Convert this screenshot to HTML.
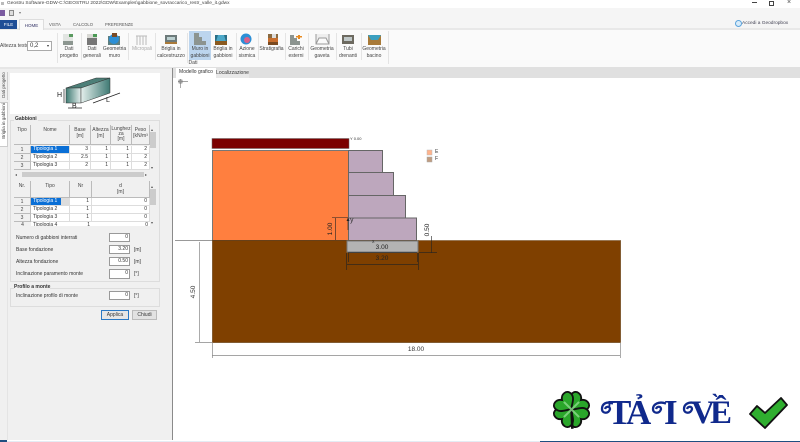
<!DOCTYPE html>
<html><head><meta charset="utf-8">
<style>
html,body{margin:0;padding:0;background:#fff}
#p{position:relative;width:800px;height:442px;overflow:hidden;background:#fff;font-family:"Liberation Sans",sans-serif;color:#333}
#p div{position:absolute}
#w{left:0;top:0;width:800px;height:442px;filter:blur(.3px)}
.t{white-space:nowrap;font-size:5px;line-height:6px}
.c{text-align:center}
.rb{font-size:5px;line-height:7px;text-align:center;color:#444;top:46px}
svg{position:absolute;left:0;top:0}
.g{background:#fff;border-bottom:1px solid #ddd;border-right:1px solid #ddd;box-sizing:border-box;font-size:5px;line-height:7px;height:8px;text-align:right;padding-right:2px}
.h{background:#f0f0f0;border-right:1px solid #bbb;border-bottom:1px solid #bbb;box-sizing:border-box;font-size:5px;line-height:6px;text-align:center;padding-top:2px;color:#444}
.i{background:#fff;border:1px solid #999;box-sizing:border-box;font-size:5px;line-height:7px;text-align:right;padding-right:1px;height:9px;width:21px;left:109px}
.a{font-size:4px;line-height:5px;color:#555}
.d{font-size:6.500px;line-height:8px;color:#333;white-space:nowrap;text-align:center}
.z{font-family:"Liberation Serif",serif;font-weight:bold;color:#10298c;font-size:35px;line-height:40px;top:393px;white-space:nowrap}
</style></head><body><div id="p"><div id="w">

<div style="left:0;top:8px;width:800px;height:20px;background:#f5f5f5"></div>
<div style="left:0;top:28px;width:800px;height:2px;background:#e8e8e8"></div>
<div style="left:0;top:30px;width:800px;height:37px;background:#fafafa"></div>
<div style="left:0;top:67px;width:800px;height:2px;background:#e6e6e6"></div>
<div style="left:0;top:69px;width:173px;height:371px;background:#f0f0f0"></div>
<div style="left:172px;top:68px;width:1px;height:372px;background:#8a8a8a"></div>
<div style="left:7px;top:145px;width:1px;height:295px;background:#e4e4e4"></div>
<div style="left:173px;top:67px;width:627px;height:11px;background:#e0e0e0"></div>
<div style="left:174px;top:78px;width:626px;height:364px;background:#fff"></div>

<div class="t" style="left:7px;top:1px;font-size:4.800px;color:#444">Geostru Software-GDW-C:\GEOSTRU 2022\GDW\Examples\gabbione_sovraccarico_restr_valle_it.gdwx</div>
<div style="left:1px;top:2px;width:3px;height:3px;background:#bbb"></div>
<div style="left:752px;top:2px;width:5px;height:1px;background:#444"></div>
<div style="left:769px;top:1px;width:3px;height:3px;border:1px solid #444"></div>
<div class="t" style="left:787px;top:0;color:#444;font-size:7px">×</div>
<div style="left:0;top:10px;width:5px;height:6px;background:#7a5aa0"></div>
<div style="left:9px;top:10px;width:5px;height:6px;background:#ddd;border:1px solid #888;box-sizing:border-box"></div>
<div class="t" style="left:19px;top:10px;font-size:4px;color:#777">▾</div>

<div class="t c" style="left:0;top:20px;width:17px;height:9px;background:#1f4e96;color:#fff;line-height:9px;font-size:4.500px">FILE</div>
<div class="t c" style="left:19px;top:19px;width:25px;height:11px;background:#fafafa;line-height:11px;color:#336;border:solid #ddd;border-width:1px 1px 0;box-sizing:border-box;font-size:4.500px">HOME</div>
<div class="t" style="left:49px;top:21px;line-height:7px;color:#555;font-size:4.200px">VISTA</div>
<div class="t" style="left:73px;top:21px;line-height:7px;color:#555;font-size:4.200px">CALCOLO</div>
<div class="t" style="left:105px;top:21px;line-height:7px;color:#555;font-size:4.200px">PREFERENZE</div>

<div style="left:735px;top:20px;width:5px;height:5px;border:1px solid #5ba3dc;border-radius:50%;background:#d8ecfa"></div>
<div class="t" style="left:742px;top:20px;line-height:7px;color:#445;font-size:4.800px">Accedi a Geodropbox</div>

<div class="t" style="left:0;top:43px;color:#444;font-size:5px">Altezza testo</div>
<div class="t" style="left:27px;top:41px;width:25px;height:10px;background:#fff;border:1px solid #aaa;box-sizing:border-box;line-height:8px;padding-left:2px;font-size:6px">0,2<span style="position:absolute;right:2px;font-size:4px">▾</span></div>

<div style="left:189px;top:31px;width:22px;height:29px;background:#bcd5ee"></div>

<svg width="800" height="70" viewBox="0 0 800 70">
<g stroke="#e4e4e4" stroke-width="1"><path d="M57.500 33V63M81.500 33V60M128.500 33V60M155.500 33V60M187.500 33V63M236.500 33V60M258.500 33V60M285.500 33V60M308.500 33V60M336.500 33V60M361.500 33V60M388.500 31V64"/></g>
<rect x="63" y="34" width="10" height="11" fill="#e2e5e2"/><rect x="63" y="41" width="10" height="4" fill="#8c9690"/><rect x="69" y="34" width="4" height="3" fill="#5a9a60"/>
<rect x="87" y="34" width="10" height="11" fill="#d8d8d4"/><rect x="87" y="38" width="10" height="7" fill="#777"/><rect x="93" y="34" width="4" height="3" fill="#4b9a55"/>
<rect x="108" y="36" width="12" height="9" fill="#5e7f80"/><circle cx="114" cy="39" r="5" fill="#2c8fd6"/><rect x="112" y="33" width="5" height="4" fill="#7a4b25"/>
<path d="M136 36h11M137 36v9M140 36v9M143 36v9M146 36v9" stroke="#bbb" fill="none"/>
<rect x="165" y="35" width="12" height="7" fill="#6d7a7a"/><rect x="167" y="37" width="8" height="3" fill="#bcd0d0"/><rect x="165" y="42" width="12" height="2" fill="#aa7a3a"/>
<path d="M194 33h5v4h3v4h4v4h-12z" fill="#8c9490"/>
<rect x="215" y="35" width="12" height="10" fill="#2a6e86"/><path d="M215 45l3-10h6l3 10z" fill="#4ca8c8"/><rect x="215" y="41" width="12" height="4" fill="#8a5a20"/>
<circle cx="246" cy="39" r="5.500" fill="#2c8fd6"/><circle cx="247" cy="40" r="3" fill="#d8608a"/>
<rect x="268" y="34" width="10" height="4" fill="#8a6a40"/><rect x="268" y="38" width="10" height="4" fill="#c86e2e"/><rect x="268" y="42" width="10" height="3" fill="#7a4a20"/><rect x="272" y="34" width="4" height="4" fill="#ddd"/>
<path d="M290 35h4v3h3v3h3v4h-10z" fill="#8c9490"/><rect x="298" y="35" width="2" height="4" fill="#e88a20"/><rect x="296" y="36" width="6" height="1.500" fill="#e88a20"/>
<path d="M316 34v10h13v-10M316 44l3-6h7l3 6" stroke="#999" fill="#eee" stroke-width="1"/>
<rect x="342" y="35" width="12" height="9" fill="#6d6a60"/><rect x="344" y="37" width="8" height="4" fill="#c0c8c8"/>
<rect x="368" y="35" width="13" height="10" fill="#3ba0c0"/><path d="M368 35v10h13v-10l-3 5h-7z" fill="#a87a38"/>
</svg>

<div class="rb" style="left:57px;width:24px">Dati<br>progetto</div>
<div class="rb" style="left:81px;width:22px">Dati<br>generali</div>
<div class="rb" style="left:102px;width:25px">Geometria<br>muro</div>
<div class="rb" style="left:130px;width:24px;color:#aaa">Micropali</div>
<div class="rb" style="left:155px;width:32px">Briglia in<br>calcestruzzo</div>
<div class="rb" style="left:189px;width:22px">Muro in<br>gabbioni</div>
<div class="rb" style="left:211px;width:24px">Briglia in<br>gabbioni</div>
<div class="rb" style="left:236px;width:22px">Azione<br>sismica</div>
<div class="rb" style="left:259px;width:25px">Stratigrafia</div>
<div class="rb" style="left:285px;width:22px">Carichi<br>esterni</div>
<div class="rb" style="left:309px;width:26px">Geometria<br>gaveta</div>
<div class="rb" style="left:336px;width:24px">Tubi<br>drenanti</div>
<div class="rb" style="left:361px;width:26px">Geometria<br>bacino</div>
<div class="rb" style="left:181px;width:24px;top:60px">Dati</div>

<div class="t c" style="left:176px;top:68px;width:40px;height:10px;background:#fff;line-height:9px;color:#333">Modello grafico</div>
<div class="t c" style="left:216px;top:70px;width:33px;height:8px;background:#e8e8e8;line-height:7px;color:#333">Localizzazione</div>

<!-- left tabs -->
<div style="left:0;top:72px;width:7px;height:28px;background:#f0f0f0;border-right:1px solid #ccc"></div>
<div style="left:0;top:102px;width:7px;height:43px;background:#fff;border:solid #ccc;border-width:1px 1px 1px 0"></div>
<div class="t" style="left:-10.500px;top:82px;width:28px;text-align:center;transform:rotate(-90deg);color:#444;font-size:4.500px">Dati progetto</div>
<div class="t" style="left:-16.500px;top:118px;width:40px;text-align:center;transform:rotate(-90deg);color:#444;font-size:4.500px">Briglia in gabbioni</div>

<!-- diagram -->
<div style="left:10px;top:73px;width:150px;height:41px;background:#fff"></div>
<svg width="175" height="120" viewBox="0 0 175 120">
<defs><linearGradient id="a" x1="0" x2="1"><stop offset="0" stop-color="#3e7a72"/><stop offset="1" stop-color="#e6f0ee"/></linearGradient>
<linearGradient id="b" x1="0" x2="1"><stop offset="0" stop-color="#e4efec"/><stop offset="1" stop-color="#3f7a74"/></linearGradient></defs>
<path d="M66 88L96 78H110L81 88z" fill="#4d7f78" stroke="#333" stroke-width=".5"/>
<rect x="66" y="88" width="15" height="15" fill="url(#a)" stroke="#333" stroke-width=".5"/>
<path d="M81 88L110 78V93L81 103z" fill="url(#b)" stroke="#333" stroke-width=".5"/>
<path d="M64 89v14M68 108h14M93 103L120 93" stroke="#222" stroke-width=".7"/>
</svg>
<div class="t" style="left:57px;top:92px;font-size:7px;line-height:8px;color:#222">H</div>
<div class="t" style="left:72px;top:103px;font-size:7px;line-height:8px;color:#222">B</div>
<div class="t" style="left:106px;top:97px;font-size:7px;line-height:8px;color:#222">L</div>

<!-- Gabbioni group -->
<div style="left:10px;top:120px;width:150px;height:162px;border:1px solid #ddd;box-sizing:border-box"></div>
<div class="t" style="left:14px;top:116px;background:#f0f0f0;padding:0 1px;color:#333;font-weight:bold;line-height:7px">Gabbioni</div>

<div style="left:14px;top:125px;width:143px;height:52px;background:#f0f0f0"></div>
<div class="h" style="left:14px;top:125px;width:17px;height:20px">Tipo</div>
<div class="h" style="left:31px;top:125px;width:39px;height:20px">Nome</div>
<div class="h" style="left:70px;top:125px;width:21px;height:20px">Base<br>[m]</div>
<div class="h" style="left:91px;top:125px;width:20px;height:20px">Altezza<br>[m]</div>
<div class="h" style="left:111px;top:125px;width:21px;height:20px;line-height:5px">Lunghez<br>za<br>[m]</div>
<div class="h" style="left:132px;top:125px;width:18px;height:20px;overflow:hidden">Peso<br>[kN/m³</div>

<div class="h" style="left:14px;top:146px;width:17px;height:8px;padding:1px 0 0">1</div>
<div class="g" style="left:31px;top:146px;width:39px;text-align:left;background:#0a6fd6;color:#fff;padding-left:2px">Tipologia 1</div>
<div class="g" style="left:70px;top:146px;width:21px">3</div><div class="g" style="left:91px;top:146px;width:20px">1</div><div class="g" style="left:111px;top:146px;width:21px">1</div><div class="g" style="left:132px;top:146px;width:18px">2</div>
<div class="h" style="left:14px;top:154px;width:17px;height:8px;padding:1px 0 0">2</div>
<div class="g" style="left:31px;top:154px;width:39px;text-align:left;padding-left:2px">Tipologia 2</div>
<div class="g" style="left:70px;top:154px;width:21px">2.5</div><div class="g" style="left:91px;top:154px;width:20px">1</div><div class="g" style="left:111px;top:154px;width:21px">1</div><div class="g" style="left:132px;top:154px;width:18px">2</div>
<div class="h" style="left:14px;top:162px;width:17px;height:8px;padding:1px 0 0">3</div>
<div class="g" style="left:31px;top:162px;width:39px;text-align:left;padding-left:2px">Tipologia 3</div>
<div class="g" style="left:70px;top:162px;width:21px">2</div><div class="g" style="left:91px;top:162px;width:20px">1</div><div class="g" style="left:111px;top:162px;width:21px">1</div><div class="g" style="left:132px;top:162px;width:18px">2</div>
<div style="left:150px;top:132px;width:6px;height:16px;background:#ccc"></div>
<div style="left:22px;top:172px;width:122px;height:5px;background:#ccc"></div>
<div class="a" style="left:151px;top:127px">▴</div><div class="a" style="left:151px;top:165px">▾</div>
<div class="a" style="left:15px;top:172px">◂</div><div class="a" style="left:145px;top:172px">▸</div>

<div style="left:14px;top:181px;width:143px;height:45px;background:#f0f0f0"></div>
<div class="h" style="left:14px;top:181px;width:17px;height:17px">Nr.</div>
<div class="h" style="left:31px;top:181px;width:39px;height:17px">Tipo</div>
<div class="h" style="left:70px;top:181px;width:22px;height:17px">Nr</div>
<div class="h" style="left:92px;top:181px;width:58px;height:17px">d<br>[m]</div>
<div class="h" style="left:14px;top:198px;width:17px;height:8px;padding:1px 0 0">1</div>
<div class="g" style="left:31px;top:198px;width:31px;text-align:left;padding-left:2px;background:#0a6fd6;color:#fff">Tipologia 1</div>
<div style="left:62px;top:198px;width:8px;height:8px;background:#ddd"></div>
<div class="g" style="left:70px;top:198px;width:22px">1</div><div class="g" style="left:92px;top:198px;width:58px">0</div>
<div class="h" style="left:14px;top:206px;width:17px;height:8px;padding:1px 0 0">2</div>
<div class="g" style="left:31px;top:206px;width:39px;text-align:left;padding-left:2px">Tipologia 2</div>
<div class="g" style="left:70px;top:206px;width:22px">1</div><div class="g" style="left:92px;top:206px;width:58px">0</div>
<div class="h" style="left:14px;top:214px;width:17px;height:8px;padding:1px 0 0">3</div>
<div class="g" style="left:31px;top:214px;width:39px;text-align:left;padding-left:2px">Tipologia 3</div>
<div class="g" style="left:70px;top:214px;width:22px">1</div><div class="g" style="left:92px;top:214px;width:58px">0</div>
<div class="h" style="left:14px;top:222px;width:17px;height:4px;padding:0;overflow:hidden;border:0">4</div>
<div class="g" style="left:31px;top:222px;width:39px;height:4px;text-align:left;padding-left:2px;overflow:hidden;border:0">Tipologia 4</div>
<div class="g" style="left:70px;top:222px;width:22px;height:4px;overflow:hidden;border:0">1</div><div class="g" style="left:92px;top:222px;width:58px;height:4px;overflow:hidden;border:0">0</div>
<div style="left:150px;top:189px;width:6px;height:16px;background:#ccc"></div>
<div class="a" style="left:151px;top:184px">▴</div><div class="a" style="left:151px;top:220px">▾</div>

<div class="t" style="left:16px;top:235px">Numero di gabbioni interrati</div><div class="i" style="top:233px">0</div>
<div class="t" style="left:16px;top:247px">Base fondazione</div><div class="i" style="top:245px">3.20</div><div class="t" style="left:134px;top:247px">[m]</div>
<div class="t" style="left:16px;top:259px">Altezza fondazione</div><div class="i" style="top:257px">0.50</div><div class="t" style="left:134px;top:259px">[m]</div>
<div class="t" style="left:16px;top:271px">Inclinazione paramento monte</div><div class="i" style="top:269px;height:10px">0</div><div class="t" style="left:134px;top:271px">[°]</div>

<div style="left:10px;top:288px;width:150px;height:19px;border:1px solid #ddd;box-sizing:border-box"></div>
<div class="t" style="left:14px;top:284px;background:#f0f0f0;font-weight:bold;line-height:7px">Profilo a monte</div>
<div class="t" style="left:16px;top:293px">Inclinazione profilo di monte</div><div class="i" style="top:291px">0</div><div class="t" style="left:134px;top:293px">[°]</div>

<div class="t c" style="left:101px;top:310px;width:28px;height:10px;line-height:8px;background:#e6e6e6;border:1px solid #2a78c4;box-sizing:border-box">Applica</div>
<div class="t c" style="left:132px;top:310px;width:25px;height:10px;line-height:8px;background:#e2e2e2;border:1px solid #bbb;box-sizing:border-box">Chiudi</div>

<!-- drawing -->
<svg width="800" height="442" viewBox="0 0 800 442">
<path d="M178 81.500h10M180.500 79v9" stroke="#888" fill="none" stroke-width=".7"/><rect x="179" y="80" width="3" height="3" fill="none" stroke="#555" stroke-width=".6"/>
<rect x="212" y="138.500" width="137" height="10" fill="#7b0000" stroke="#666" stroke-width=".5"/>
<rect x="212.500" y="150.500" width="136" height="90" fill="#ff7f3f" stroke="#777"/>
<rect x="348.500" y="150.500" width="34" height="22" fill="#bda7bd" stroke="#666"/>
<rect x="348.500" y="172.500" width="45" height="23" fill="#bda7bd" stroke="#666"/>
<rect x="348.500" y="195.500" width="57" height="23" fill="#bda7bd" stroke="#666"/>
<rect x="348.500" y="218" width="68" height="22.500" fill="#bda7bd" stroke="#666"/>
<rect x="212.500" y="240.500" width="408" height="102" fill="#7f4000" stroke="#5a3000" stroke-width=".6"/>
<path d="M175 240.500h37" stroke="#999"/><path d="M419 240.500h201" stroke="#a08060" stroke-width=".7"/>
<rect x="347" y="241" width="71" height="11" fill="#b3b3b3" stroke="#777"/>
<g stroke="#222" stroke-width=".6" fill="none">
<path d="M348.500 253v9M417.500 253v9M348 252.700h69M346.500 253v17M418.500 253v17M347 264.700h71"/>
<path d="M332 217.500h16M335.700 218v22M348 218v12M419 252.700h18M431.700 236v16.500"/>
</g>
<path d="M195 342.500h17M199.500 242v100M212.500 343v15M212 355.500h408M620.500 343v15" stroke="#888" stroke-width=".7" fill="none"/>
<path d="M348 218l-1.500 3h3z" fill="#222"/>
<rect x="427" y="150" width="5" height="5" fill="#ffb38c" stroke="#bbb" stroke-width=".5"/>
<rect x="427" y="157" width="5" height="5" fill="#c09c80" stroke="#aaa" stroke-width=".5"/>
</svg>
<div class="t" style="left:435px;top:149px">E</div>
<div class="t" style="left:435px;top:156px">F</div>
<div class="t" style="left:350px;top:136px;font-size:4px">Y 0.00</div>
<div class="t" style="left:350px;top:217px;font-size:7px;line-height:8px">y</div>
<div class="t" style="left:372px;top:239px;font-size:5px">x</div>
<div class="d" style="left:367px;top:244px;width:30px;color:#222">3.00</div>
<div class="d" style="left:367px;top:255px;width:30px;color:#222">3.20</div>
<div class="d" style="left:321px;top:225px;width:20px;transform:rotate(-90deg);color:#222">1.00</div>
<div class="d" style="left:418px;top:226px;width:20px;transform:rotate(-90deg);color:#222">0.50</div>
<div class="d" style="left:184px;top:288px;width:20px;transform:rotate(-90deg)">4.50</div>
<div class="d" style="left:401px;top:346px;width:30px">18.00</div>

<!-- status line -->
<div style="left:0;top:441px;width:540px;height:1px;background:#e4ecf4"></div>
<div style="left:0;top:440px;width:7px;height:2px;background:#1f4e80"></div>
<div style="left:540px;top:441px;width:260px;height:1px;background:#1f4e80"></div>
</div>

<!-- watermark -->
<svg width="800" height="442" viewBox="0 0 800 442">
<g transform="translate(571.500 409.500) scale(.84)" stroke="#111" stroke-width="2.200" fill="#2aa62a">
<path transform="rotate(45)" d="M0 0C-3-4-13-6-13-14C-13-21-4-22 0-16C4-22 13-21 13-14C13-6 3-4 0 0z"/>
<path transform="rotate(135)" d="M0 0C-3-4-13-6-13-14C-13-21-4-22 0-16C4-22 13-21 13-14C13-6 3-4 0 0z"/>
<path transform="rotate(225)" d="M0 0C-3-4-13-6-13-14C-13-21-4-22 0-16C4-22 13-21 13-14C13-6 3-4 0 0z"/>
<path transform="rotate(315)" d="M0 0C-3-4-13-6-13-14C-13-21-4-22 0-16C4-22 13-21 13-14C13-6 3-4 0 0z"/>
<path d="M0 0l1 23" stroke-width="3"/>
<path d="M-9-9L9 9M9-9L-9 9" stroke="#8fdc8f" stroke-width="2.500" stroke-opacity=".8"/>
</g>
<g fill="none" stroke="#10298c" stroke-width="2.300">
<path d="M613 403.500C606 401 602 404 602 409C602 414 609 414 610 409C610 406 606 406 605 409"/>
<path d="M666 403.500C659 401 653 404 653 409C653 414 660 414 661 409C661 406 657 406 656 409"/>
<path d="M696 403.500C689 401 684 404 684 409C684 414 691 414 692 409C692 406 688 406 687 409"/>
</g>
<path d="M750 414l7-8 8 7 16-15 6 7-22 23z" fill="#2fae2f" stroke="#111" stroke-width="1.800" stroke-linejoin="round"/>
</svg>
<div class="z" style="left:608px">T</div>
<div class="z" style="left:626px">Ả</div>
<div class="z" style="left:664px">I</div>
<div class="z" style="left:691px;font-size:33px">V</div>
<div class="z" style="left:710px;font-size:33px">Ề</div>

</div></body></html>
